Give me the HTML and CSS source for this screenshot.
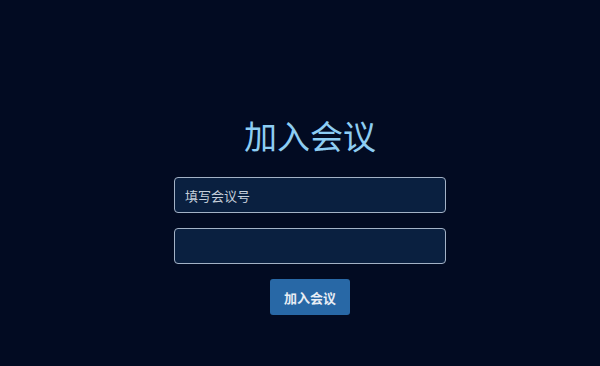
FILE: index.html
```html
<!DOCTYPE html>
<html lang="zh-CN">
<head>
<meta charset="utf-8">
<title>加入会议</title>
<link rel="stylesheet" href="styles.css">
</head>
<body>
<main class="join">
  <h1 class="join-title">加入会议</h1>
  <form class="join-form">
    <input class="join-input" type="text" placeholder="填写会议号">
    <input class="join-input" type="text">
    <button class="join-button" type="button">加入会议</button>
  </form>
</main>
</body>
</html>
```
FILE: styles.css
```css
html, body {
  margin: 0;
  padding: 0;
  height: 100%;
}
body {
  background: #020b22;
  font-family: "Noto Sans CJK SC", "Noto Sans", sans-serif;
}
.join {
  display: flex;
  flex-direction: column;
  align-items: center;
  padding-top: 118px;
  padding-left: 20px;
}
.join-title {
  margin: 0;
  font-size: 33px;
  line-height: 34px;
  font-weight: 400;
  color: #8dcdf3;
}
.join-form {
  margin-top: 25px;
  display: flex;
  flex-direction: column;
  align-items: center;
  gap: 15px;
}
.join-input {
  box-sizing: border-box;
  width: 272px;
  height: 36px;
  margin: 0;
  padding: 0 10px;
  background: #0a2040;
  border: 1px solid #a3b2c6;
  border-radius: 4px;
  color: #d0d8e2;
  font-family: inherit;
  font-size: 13px;
  outline: none;
}
.join-input::placeholder {
  color: #c6cfdb;
}
.join-button {
  box-sizing: border-box;
  width: 80px;
  height: 36px;
  margin: 0;
  padding: 0;
  background: #2868a6;
  border: none;
  border-radius: 3px;
  color: #e8eef5;
  font-family: inherit;
  font-size: 13px;
  font-weight: 700;
}
```
